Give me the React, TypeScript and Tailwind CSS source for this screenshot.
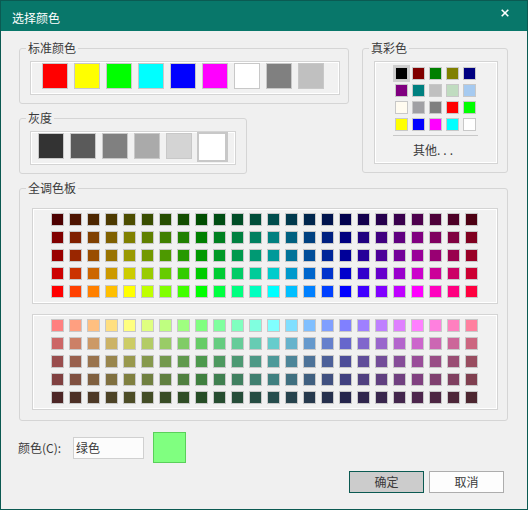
import React from 'react';

const FONT = "font-['Noto_Sans_CJK_SC','Noto_Sans',sans-serif]";

// hsv -> hex, used for the palette grids
const hsv = (h: number, s: number, v: number) => {
  const c = v * s;
  const x = c * (1 - Math.abs(((h / 60) % 2) - 1));
  const m = v - c;
  let r = 0, g = 0, b = 0;
  if (h < 60) [r, g, b] = [c, x, 0];
  else if (h < 120) [r, g, b] = [x, c, 0];
  else if (h < 180) [r, g, b] = [0, c, x];
  else if (h < 240) [r, g, b] = [0, x, c];
  else if (h < 300) [r, g, b] = [x, 0, c];
  else [r, g, b] = [c, 0, x];
  const hex = (n: number) => Math.round((n + m) * 255).toString(16).padStart(2, '0');
  return `#${hex(r)}${hex(g)}${hex(b)}`;
};

const hues = Array.from({ length: 24 }, (_, i) => i * 15);
const darkRows = [0.3, 0.5, 0.6, 0.8, 1.0];
const paleRows = [1.0, 0.8, 0.6, 0.5, 0.3];

const standard = ['#ff0000', '#ffff00', '#00ff00', '#00ffff', '#0000ff', '#ff00ff', '#ffffff', '#808080', '#c0c0c0'];
const grays = ['#333333', '#5a5a5a', '#808080', '#aaaaaa', '#d4d4d4'];
const trueColors = [
  '#000000', '#800000', '#008000', '#808000', '#000080',
  '#800080', '#008080', '#c0c0c0', '#c0dcc0', '#a6caf0',
  '#fffbf0', '#a0a0a4', '#808080', '#ff0000', '#00ff00',
  '#ffff00', '#0000ff', '#ff00ff', '#00ffff', '#ffffff',
];

const Group: React.FC<{ label: string; className?: string; children: React.ReactNode }> = ({ label, className, children }) => (
  <div className={`relative rounded-[3px] border border-[#d5d5d5] ${className ?? ''}`}>
    <span className="absolute left-[6px] top-[-9px] bg-[#f0f0f0] px-[2px] text-[12px] leading-[16px]">{label}</span>
    {children}
  </div>
);

const Box: React.FC<{ className?: string; children: React.ReactNode }> = ({ className, children }) => (
  <div className={`border border-[#d4d4d4] bg-[#f1f1f1] shadow-[inset_1px_1px_0_#fff,inset_-1px_-1px_0_#fff] ${className ?? ''}`}>
    {children}
  </div>
);

const Palette: React.FC<{ rows: number[]; sat: number }> = ({ rows, sat }) => (
  <Box className="h-[96px] w-[466px] pl-[18px] pt-[4px]">
    <div className="grid grid-cols-[repeat(24,13px)] gap-[5px]">
      {rows.map((v) =>
        hues.map((h) => (
          <div key={`${v}-${h}`} className="h-[13px] w-[13px] border border-[#c8c8c8]" style={{ backgroundColor: hsv(h, sat, v) }} />
        ))
      )}
    </div>
  </Box>
);

export default function App() {
  return (
    <div className={`${FONT} flex h-[510px] w-[528px] flex-col border border-[#0b5a52] bg-[#f0f0f0] text-[#3a3a3a]`}>
      <div className="flex h-[30px] shrink-0 items-center justify-between bg-[#08776a] pl-[11px] pr-[18px] pt-[3px]">
        <span className="text-[12px] text-white">选择颜色</span>
        <svg width="8" height="8" viewBox="0 0 8 8" className="mb-[9px]">
          <path d="M0.7 0.7L7.3 7.3M7.3 0.7L0.7 7.3" stroke="#fff" strokeWidth="1.6" />
        </svg>
      </div>

      <div className="flex gap-[13px] pl-[18px] pt-[17px]">
        <div className="flex flex-col gap-[14px]">
          <Group label="标准颜色" className="h-[56px] w-[330px] pl-[10px] pt-[12px]">
            <Box className="flex h-[34px] w-[310px] gap-[6px] pl-[11px] pt-[1px]">
              {standard.map((c) => (
                <div key={c} className="h-[26px] w-[26px] border border-[#c8c8c8]" style={{ backgroundColor: c }} />
              ))}
            </Box>
          </Group>
          <Group label="灰度" className="h-[56px] w-[228px] pl-[10px] pt-[12px]">
            <Box className="flex h-[34px] w-[206px] items-start gap-[6px] pl-[7px] pt-[1px]">
              {grays.map((c) => (
                <div key={c} className="h-[26px] w-[26px] border border-[#c8c8c8]" style={{ backgroundColor: c }} />
              ))}
              <div className="-ml-px -mt-px box-content h-[26px] w-[26px] border-b-2 border-l-2 border-r-[3px] border-t-2 border-[#c8c8c8] bg-white" />
            </Box>
          </Group>
        </div>

        <Group label="真彩色" className="h-[125px] w-[146px] pl-[11px] pt-[12px]">
          <Box className="flex h-[103px] w-[124px] flex-col pl-[18px] pt-[3px]">
            <div className="grid w-[85px] grid-cols-5">
              {trueColors.map((c, i) => (
                <div key={i} className={`flex h-[17px] w-[17px] items-center justify-center ${i === 0 ? 'bg-[#cfcfcf]' : ''}`}>
                  <div className="h-[13px] w-[13px] border border-[#c8c8c8]" style={{ backgroundColor: c }} />
                </div>
              ))}
            </div>
            <div className="mt-[2px] h-px w-[85px] bg-[#c8c8c8]" />
            <div className="mt-[6px] pl-[20px] text-[12px] leading-[16px]">
              其他<span className="tracking-[3px]">...</span>
            </div>
          </Box>
        </Group>
      </div>

      <div className="pl-[18px] pt-[14px]">
        <Group label="全调色板" className="flex h-[233px] w-[489px] flex-col gap-[10px] pl-[12px] pt-[19px]">
          <Palette rows={darkRows} sat={1} />
          <Palette rows={paleRows} sat={0.5} />
        </Group>
      </div>

      <div className="mt-[11px] flex items-center pl-[17px] text-[12px]">
        <span className="w-[55px]">颜色(C):</span>
        <div className="flex h-[22px] w-[71px] items-center border border-[#d0d0d0] bg-[#fcfcfc] pl-[2px]">绿色</div>
        <div className="ml-[9px] h-[31px] w-[33px] border border-[#5ad05a] bg-[#80ff80]" />
      </div>

      <div className="mt-[8px] flex justify-end gap-[5px] pr-[23px] text-[12px]">
        <button className="h-[22px] w-[75px] border border-[#0b5a52] bg-[#cccccc]">确定</button>
        <button className="h-[22px] w-[75px] border border-[#adadad] bg-[#fdfdfd]">取消</button>
      </div>
    </div>
  );
}
